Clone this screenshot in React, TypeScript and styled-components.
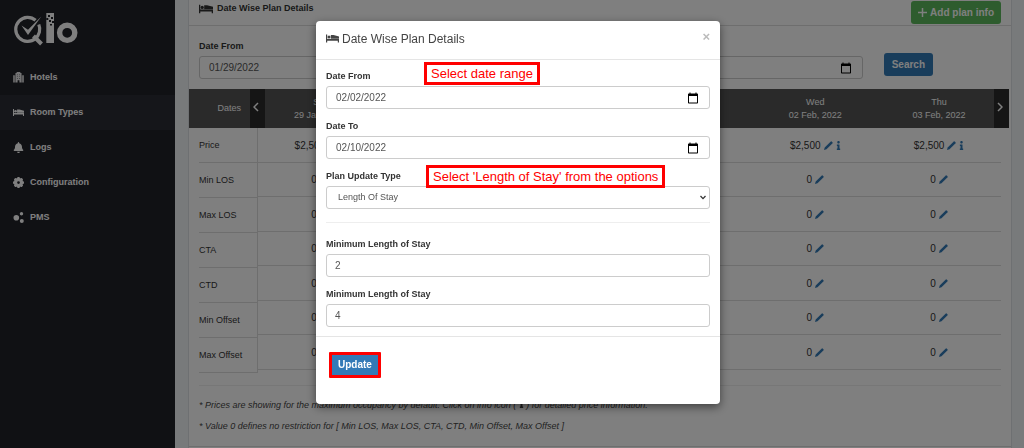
import React from "react";
import styled, { createGlobalStyle } from "styled-components";
import { FaBell, FaInfo } from "react-icons/fa";

const GlobalStyle = createGlobalStyle`
  *, *::before, *::after { box-sizing: border-box; }
  body {
    margin: 0;
    background: #f1f4f7;
    color: #333;
    font-family: "Liberation Sans", Arial, sans-serif;
    font-size: 9px;
    line-height: 13px;
  }
  button, input, select { font: inherit; }
`;

const Shell = styled.div`
  display: flex;
  min-height: 100vh;
`;

const Sidebar = styled.aside`
  flex: 0 0 175px;
  background: #202229;
  color: #fff;
`;

const Brand = styled.a`
  display: block;
  height: 60px;
  padding: 13px 0 0 13px;
  color: #fff;
  svg { display: block; }
`;

const NavLink = styled.a<{ $active?: boolean }>`
  display: flex;
  align-items: center;
  height: 35px;
  padding-left: 13px;
  gap: 6px;
  color: #fff;
  background: ${(p) => (p.$active ? "#2a2c35" : "transparent")};
  font-size: 9px;
  font-weight: bold;
  text-decoration: none;
  svg { width: 11px; height: 11px; }
`;

const Main = styled.main`
  flex: 1;
  min-width: 0;
  display: flex;
  padding: 0 12px 0 13px;
`;

const Card = styled.section`
  flex: 1;
  min-width: 0;
  background: #fff;
  border: solid #dde1e5;
  border-width: 0 1px;
`;

const CardHeader = styled.header`
  display: flex;
  align-items: center;
  justify-content: space-between;
  height: 26px;
  padding: 0 10px;
  border-bottom: 1px solid #ddd;
`;

const CardTitle = styled.h1`
  display: flex;
  align-items: center;
  gap: 4px;
  margin: 0 0 8px;
  font-size: 9px;
`;

const Button = styled.button<{ $tone: string; $square?: boolean; $pad?: number }>`
  display: inline-flex;
  align-items: center;
  justify-content: center;
  gap: 3px;
  height: 23px;
  padding: 0 ${(p) => p.$pad ?? 8}px;
  border: 0;
  border-radius: ${(p) => (p.$square ? 0 : 3)}px;
  background: ${(p) => p.$tone};
  color: #fff;
  font-size: 10px;
  font-weight: bold;
  white-space: nowrap;
`;

const Filters = styled.form`
  display: flex;
  align-items: flex-end;
  padding: 14px 78px 10px 10px;
  gap: 21px;
`;

const Field = styled.div`
  position: relative;
  flex: 1;
  min-width: 0;
`;

const Label = styled.label`
  display: block;
  margin-bottom: 3px;
  font-weight: bold;
  line-height: 13px;
`;

const Input = styled.input`
  display: block;
  width: 100%;
  height: 23px;
  padding: 0 10px 0 8px;
  border: 1px solid #ccc;
  border-radius: 3px;
  background: #fff;
  color: #555;
  font-size: 10px;
  &[type="date"] { padding-left: 9px; }
  &::-webkit-datetime-edit-month-field,
  &::-webkit-datetime-edit-day-field,
  &::-webkit-datetime-edit-year-field {
    padding: 0;
  }
  &::-webkit-calendar-picker-indicator {
    width: 12px;
    height: 12px;
    padding: 0;
    background-size: 12px 12px;
  }
`;

const Select = styled.select`
  display: block;
  width: 100%;
  height: 23px;
  padding: 0 20px 0 11px;
  appearance: none;
  border: 1px solid #ccc;
  border-radius: 3px;
  background: #fff;
  color: #555;
  font-size: 9px;
`;

const SelectBox = styled.div`
  position: relative;
  svg {
    position: absolute;
    top: 9px;
    right: 4px;
    pointer-events: none;
  }
`;

const SearchSlot = styled.div`
  padding-bottom: 3px;
  line-height: 0;
`;

const Board = styled.div`
  position: relative;
  display: flex;
  align-items: flex-start;
  margin-right: 10px;
`;

const LabelTable = styled.table`
  flex: 0 0 69px;
  border-collapse: separate;
  border-spacing: 0;
  border-right: 1px solid #ddd;
  th {
    height: 35px;
    padding: 0 0 0 10px;
    text-align: left;
    font-weight: normal;
    background: linear-gradient(#ddd, #ddd) 10px 100% / 100% 1px no-repeat;
  }
  thead th {
    height: 39px;
    padding: 0 16px 0 0;
    text-align: right;
    color: #fff;
    background: #555;
  }
`;

const RateTable = styled.table`
  flex: 1 1 0;
  width: 100%;
  table-layout: fixed;
  border-collapse: separate;
  border-spacing: 0;
  text-align: center;
  th {
    height: 39px;
    padding: 0;
    color: #fff;
    background: #555;
    font-weight: normal;
  }
  td {
    height: 34px;
    padding: 0;
    border-bottom: 1px solid #ddd;
    font-size: 10px;
  }
  tbody tr:nth-child(odd) td { height: 35px; }
`;

const PageArrow = styled.button<{ $side: "prev" | "next" }>`
  position: absolute;
  top: 0;
  ${(p) => (p.$side === "prev" ? "left: 61px;" : "right: -8px;")}
  display: flex;
  align-items: center;
  justify-content: center;
  width: 15px;
  height: 39px;
  padding: 0 3px 3px 0;
  border: 0;
  background: #2b2b2b;
  color: #fff;
`;

const Cell = styled.span`
  display: inline-flex;
  align-items: center;
  gap: 3px;
`;

const IconButton = styled.button`
  display: flex;
  padding: 0;
  border: 0;
  background: none;
  color: #337ab7;
`;

const InfoIcon = styled(FaInfo)`
  width: 5px;
  height: 9px;
`;

const Notes = styled.div`
  margin: 12px 10px 0;
  padding: 9px 0;
  border-top: 1px solid #eee;
  color: #444;
  font-style: italic;
  p { margin: 0; line-height: 21px; }
`;

const CardFoot = styled.div`
  border-top: 1px solid #ddd;
`;

const Backdrop = styled.div`
  position: fixed;
  inset: 0;
  display: flex;
  align-items: flex-start;
  justify-content: center;
  padding: 21px 0 0 12px;
  background: rgba(0, 0, 0, 0.5);
`;

const Dialog = styled.div`
  width: 404px;
  max-width: 100%;
  border-radius: 4px;
  background: #fff;
  box-shadow: 0 3px 10px rgba(0, 0, 0, 0.5);
`;

const DialogHeader = styled.header`
  display: flex;
  justify-content: space-between;
  height: 39px;
  padding: 9px 10px;
  border-bottom: 1px solid #e5e5e5;
`;

const DialogTitle = styled.h2`
  display: flex;
  gap: 3px;
  margin: 0;
  color: #444;
  font-size: 12px;
  font-weight: normal;
  line-height: 19px;
  svg { margin-top: 4px; }
`;

const Close = styled.button`
  height: 13px;
  padding: 0;
  border: 0;
  background: none;
  color: #bbb;
  font-size: 13px;
  font-weight: bold;
  line-height: 13px;
`;

const DialogBody = styled.div`
  display: flex;
  flex-direction: column;
  gap: 11px;
  padding: 10px 10px 9px;
`;

const Rule = styled.hr`
  width: 100%;
  margin: 2px 0 4px;
  border: 0;
  border-top: 1px solid #eee;
`;

const Callout = styled.div<{ $lift: number; $left: number }>`
  position: absolute;
  top: -${(p) => p.$lift}px;
  left: ${(p) => p.$left}px;
  height: 23px;
  padding: 0 4px;
  border: 3px solid #f00;
  background: #fff;
  color: #f00;
  font-size: 13px;
  line-height: 17px;
  white-space: nowrap;
`;

const DialogFooter = styled.footer`
  padding: 15px 13px 26px;
  border-top: 1px solid #e5e5e5;
  line-height: 0;
`;

const Highlight = styled.span`
  display: inline-block;
  border: 3px solid #f00;
  border-radius: 1px;
  button { height: 20px; }
`;

const Logo = () => (
  <svg width="65" height="33" viewBox="0 0 65 33" fill="none" stroke="currentColor" aria-label="Qlo">
    <path d="M22.600 7.300A12 12 0 1 0 22.500 25.500" strokeWidth="3.200" />
    <path d="M25.800 11.500A12 12 0 0 1 22.300 25.500" strokeWidth="3.200" />
    <path d="M20.500 23l8 8" strokeWidth="4" />
    <path d="M8.500 12.500l6.500 4.200L28.300 3.600 15 22z" fill="currentColor" stroke="none" />
    <path d="M33.300 0H41v30h-7.700z" fill="currentColor" stroke="none" />
    <path d="M35 2h2v2h-2zM38 4h2v2h-2zM33.300 5h2v2h-2zM36 7h2v2h-2zM39 8h2v2h-2zM37 11h2v1.500h-2z" fill="#202229" stroke="none" />
    <circle cx="54.200" cy="19.800" r="7.600" strokeWidth="5.400" />
  </svg>
);

const BedIcon = ({ width = 13, height = 9 }: { width?: number; height?: number }) => (
  <svg width={width} height={height} viewBox="0 0 13 9" fill="currentColor" aria-hidden="true">
    <path d="M0 .5h1.200v4.500H13V8.500h-1.200V6.800H1.200v1.700H0z" />
    <circle cx="3" cy="3" r="1.500" />
    <path d="M4.800 1h2.700L13 2.400v2.400H4.800z" />
  </svg>
);

const HotelIcon = () => (
  <svg viewBox="0 0 12 12" fill="currentColor" aria-hidden="true">
    <path d="M0 3.500h2.500V11.500H0zM9.500 3.500H12V11.500H9.500z" opacity=".7" />
    <path d="M2.700 1H4V0h4v1h1.300v10.500H7V9H5v2.500H2.700z" opacity=".9" />
    <path d="M4.300 2.500h1v1h-1zM6.700 2.500h1v1h-1zM4.300 4.500h1v1h-1zM6.700 4.500h1v1h-1zM4.300 6.500h1v1h-1zM6.700 6.500h1v1h-1z" fill="#202229" opacity=".5" />
  </svg>
);

const GearIcon = () => (
  <svg viewBox="0 0 24 24" fill="currentColor" aria-hidden="true">
    <circle cx="12" cy="12" r="6.500" fill="none" stroke="currentColor" strokeWidth="7" />
    {[0, 45, 90, 135].map((a) => (
      <g key={a} transform={`rotate(${a} 12 12)`}>
        <rect x="9" y="0" width="6" height="6" rx="2" />
        <rect x="9" y="18" width="6" height="6" rx="2" />
      </g>
    ))}
  </svg>
);

const NodesIcon = () => (
  <svg viewBox="0 0 11 11" fill="currentColor" aria-hidden="true">
    <circle cx="3.300" cy="5.800" r="2.800" />
    <circle cx="8.500" cy="1.800" r="1.700" />
    <circle cx="8.800" cy="9" r="2" />
  </svg>
);

const PencilIcon = () => (
  <svg width="9" height="9" viewBox="0 0 9 9" fill="currentColor" aria-hidden="true">
    <path d="M0 9l.7-2.500L6.800.4q.4-.4.800 0l1 1q.4.400 0 .8L2.500 8.300z" />
  </svg>
);

const PlusIcon = () => (
  <svg width="9" height="9" viewBox="0 0 9 9" stroke="currentColor" strokeWidth="1.500" aria-hidden="true">
    <path d="M4.500 0v9M0 4.500h9" />
  </svg>
);

const Chevron = ({ d }: { d: string }) => (
  <svg width="6" height="10" viewBox="0 0 6 10" fill="none" stroke="currentColor" strokeWidth="1.500" aria-hidden="true">
    <path d={d} />
  </svg>
);

const navItems = [
  { label: "Hotels", icon: <HotelIcon /> },
  { label: "Room Types", icon: <BedIcon />, active: true },
  { label: "Logs", icon: <FaBell /> },
  { label: "Configuration", icon: <GearIcon /> },
  { label: "PMS", icon: <NodesIcon /> },
];

const days = [
  ["Sat", "29 Jan, 2022"],
  ["Sun", "30 Jan, 2022"],
  ["Mon", "31 Jan, 2022"],
  ["Tue", "01 Feb, 2022"],
  ["Wed", "02 Feb, 2022"],
  ["Thu", "03 Feb, 2022"],
];

const rows = ["Price", "Min LOS", "Max LOS", "CTA", "CTD", "Min Offset", "Max Offset"];

export default function App() {
  return (
    <>
      <GlobalStyle />
      <Shell>
        <Sidebar>
          <Brand href="#"><Logo /></Brand>
          <nav>
            {navItems.map((n) => (
              <NavLink key={n.label} href="#" $active={n.active}>
                {n.icon}
                {n.label}
              </NavLink>
            ))}
          </nav>
        </Sidebar>
        <Main>
          <Card>
            <CardHeader>
              <CardTitle><BedIcon width={14} height={10} />Date Wise Plan Details</CardTitle>
              <Button type="button" $tone="#5cb85c" $pad={7}><PlusIcon />Add plan info</Button>
            </CardHeader>
            <Filters>
              <Field>
                <Label htmlFor="filter-from">Date From</Label>
                <Input id="filter-from" type="date" defaultValue="2022-01-29" />
              </Field>
              <Field>
                <Label htmlFor="filter-to">Date To</Label>
                <Input id="filter-to" type="date" defaultValue="2022-02-03" />
              </Field>
              <SearchSlot>
                <Button type="button" $tone="#337ab7">Search</Button>
              </SearchSlot>
            </Filters>
            <Board>
              <LabelTable>
                <thead><tr><th scope="col">Dates</th></tr></thead>
                <tbody>
                  {rows.map((r) => <tr key={r}><th scope="row">{r}</th></tr>)}
                </tbody>
              </LabelTable>
              <RateTable>
                <thead>
                  <tr>
                    {days.map(([day, date]) => (
                      <th key={date} scope="col">{day}<br />{date}</th>
                    ))}
                  </tr>
                </thead>
                <tbody>
                  {rows.map((r) => (
                    <tr key={r}>
                      {days.map(([, date]) => (
                        <td key={date}>
                          <Cell>
                            {r === "Price" ? "$2,500" : "0"}
                            <IconButton type="button" aria-label={`Edit ${r}`}><PencilIcon /></IconButton>
                            {r === "Price" && (
                              <IconButton type="button" aria-label="Price details"><InfoIcon /></IconButton>
                            )}
                          </Cell>
                        </td>
                      ))}
                    </tr>
                  ))}
                </tbody>
              </RateTable>
              <PageArrow type="button" $side="prev" aria-label="Previous dates"><Chevron d="M5 1L1 5l4 4" /></PageArrow>
              <PageArrow type="button" $side="next" aria-label="Next dates"><Chevron d="M1 1l4 4-4 4" /></PageArrow>
            </Board>
            <Notes>
              <p>* Prices are showing for the maximum occupancy by default. Click on info icon ( <InfoIcon /> ) for detailed price information.</p>
              <p>* Value 0 defines no restriction for [ Min LOS, Max LOS, CTA, CTD, Min Offset, Max Offset ]</p>
            </Notes>
            <CardFoot />
          </Card>
        </Main>
      </Shell>
      <Backdrop>
        <Dialog role="dialog" aria-modal="true" aria-labelledby="dialog-title">
          <DialogHeader>
            <DialogTitle id="dialog-title"><BedIcon />Date Wise Plan Details</DialogTitle>
            <Close type="button" aria-label="Close">×</Close>
          </DialogHeader>
          <DialogBody>
            <Field>
              <Label htmlFor="plan-from">Date From</Label>
              <Input id="plan-from" type="date" defaultValue="2022-02-02" />
              <Callout $lift={8} $left={98}>Select date range</Callout>
            </Field>
            <Field>
              <Label htmlFor="plan-to">Date To</Label>
              <Input id="plan-to" type="date" defaultValue="2022-02-10" />
            </Field>
            <Field>
              <Label htmlFor="plan-type">Plan Update Type</Label>
              <SelectBox>
                <Select id="plan-type" defaultValue="los">
                  <option value="los">Length Of Stay</option>
                </Select>
                <svg width="6" height="5" viewBox="0 0 6 5" fill="none" stroke="#333" strokeWidth="1.300" aria-hidden="true">
                  <path d="M.5 1L3 3.600 5.500 1" />
                </svg>
              </SelectBox>
              <Callout $lift={5} $left={100}>Select 'Length of Stay' from the options</Callout>
            </Field>
            <Rule />
            <Field>
              <Label htmlFor="stay-a">Minimum Length of Stay</Label>
              <Input id="stay-a" type="text" defaultValue="2" />
            </Field>
            <Field>
              <Label htmlFor="stay-b">Minimum Length of Stay</Label>
              <Input id="stay-b" type="text" defaultValue="4" />
            </Field>
          </DialogBody>
          <DialogFooter>
            <Highlight><Button type="button" $tone="#337ab7" $square $pad={6}>Update</Button></Highlight>
          </DialogFooter>
        </Dialog>
      </Backdrop>
    </>
  );
}
